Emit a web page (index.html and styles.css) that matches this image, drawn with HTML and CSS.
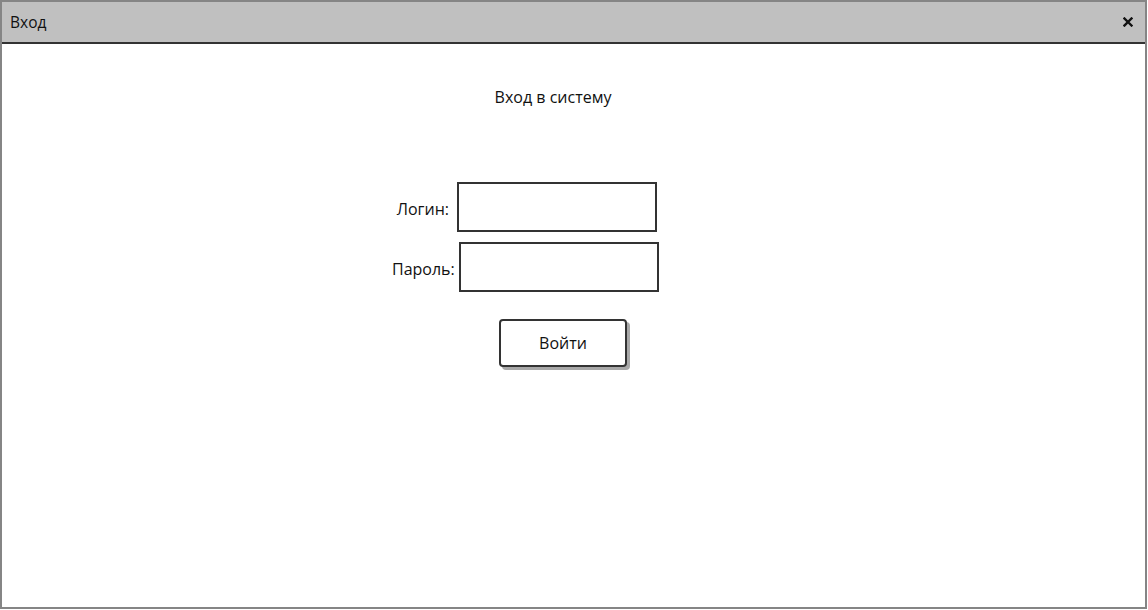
FILE: index.html
```html
<!DOCTYPE html>
<html lang="ru">
<head>
<meta charset="utf-8">
<title>Вход</title>
<link rel="stylesheet" href="styles.css">
</head>
<body>
<div class="window">
  <div class="titlebar">
    <span class="title">Вход</span>
    <svg class="close" width="10" height="10" viewBox="0 0 10 10" aria-label="Закрыть">
      <path d="M1.5 1.5 L8.5 8.5 M8.5 1.5 L1.5 8.5" stroke="#111" stroke-width="2.4" stroke-linecap="square" fill="none"/>
    </svg>
  </div>
  <div class="content">
    <div class="form">
      <div class="heading">Вход в систему</div>
      <div class="row row-login">
        <label class="label">Логин:</label>
        <div class="input"></div>
      </div>
      <div class="row row-pass">
        <label class="label">Пароль:</label>
        <div class="input"></div>
      </div>
      <button class="btn">Войти</button>
    </div>
  </div>
</div>
</body>
</html>
```
FILE: styles.css
```css
* { box-sizing: border-box; }
html, body { margin: 0; padding: 0; background: #fff; }
body {
  font-family: "Open Sans", "DejaVu Sans", sans-serif;
  font-size: 16px;
  color: #111;
}
.window {
  width: 1147px;
  height: 609px;
  border: 2px solid #858585;
  display: flex;
  flex-direction: column;
}
.titlebar {
  height: 42px;
  background: #c0c0c0;
  border-bottom: 2px solid #333;
  display: flex;
  align-items: center;
  justify-content: space-between;
  padding: 0 12px 0 8px;
}
.title { font-size: 15.5px; line-height: 20px; }
.close { display: block; }
.content { flex: 1; padding-top: 43px; }
.form { margin-left: 388px; width: 326px; }
.heading {
  text-align: center;
  line-height: 20px;
  height: 20px;
  margin-bottom: 75px;
}
.row { display: flex; align-items: center; }
.row-pass { margin-top: 10px; margin-left: 2px; }
.label {
  width: 67px;
  text-align: right;
  padding-right: 8px;
  padding-top: 4px;
  white-space: nowrap;
}
.row-pass .label { padding-right: 7px; }
.input {
  width: 200px;
  height: 50px;
  border: 2px solid #333;
  background: #fff;
}
.btn {
  display: block;
  margin: 27px 0 0 109px;
  width: 128px;
  height: 48px;
  border: 2px solid #333;
  border-radius: 4px;
  background: #fff;
  box-shadow: 3px 3px 0 #a8a8a8;
  font-family: inherit;
  font-size: 16px;
  color: #111;
  padding: 0;
}
```
